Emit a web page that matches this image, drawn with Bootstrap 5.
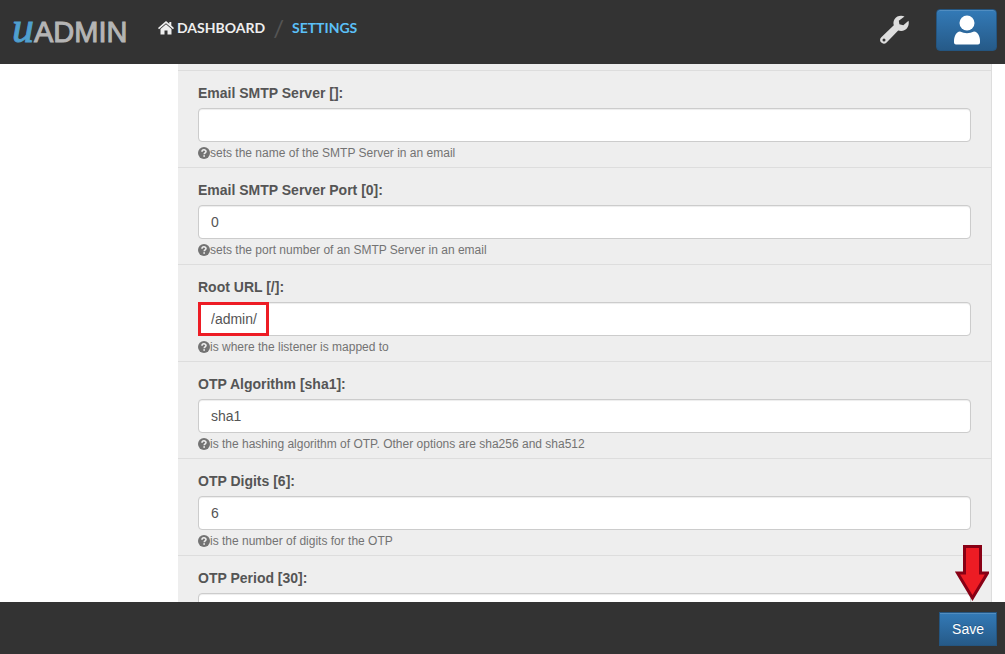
<!DOCTYPE html>
<html lang="en">
<head>
<meta charset="utf-8">
<meta name="viewport" content="width=device-width, initial-scale=1">
<title>uAdmin - Settings</title>
<link href="https://cdn.jsdelivr.net/npm/bootstrap@5.3.0/dist/css/bootstrap.min.css" rel="stylesheet">
<style>
  body { font-family: "Liberation Sans", Arial, sans-serif; font-size: 14px; line-height: 20px; color: #555; background: #fff; }
  .top-bar { height: 64px; padding: 0 8px 4px 12px; background: #333; }
  .bottom-bar { height: 52px; padding: 2px 8px 0; background: #333; }
  .brand { width: 146px; font-family: "Liberation Sans", sans-serif; font-size: 29px; line-height: 40px; color: #b5b5b5; -webkit-text-stroke: 1px #b5b5b5; }
  .brand-u { font-family: "Liberation Serif", serif; font-style: italic; font-size: 44px; color: #4f9fcf; -webkit-text-stroke: 1px #4f9fcf; }
  .crumbs { --bs-breadcrumb-margin-bottom: 0; --bs-breadcrumb-item-padding-x: 8px; padding-bottom: 4px; font-family: Lato, sans-serif; font-size: 14px; font-weight: 700; line-height: 24px; }
  .crumbs a { color: #eee; }
  .crumbs svg { margin-right: 3px; }
  .crumbs .breadcrumb-item + .breadcrumb-item::before { color: #555; font-size: 24px; font-weight: 400; }
  .crumbs .active { color: #5bc0f8; }
  .tools { margin-right: 26px; }
  .btn-grad { --bs-btn-color: #fff; --bs-btn-hover-color: #fff; --bs-btn-border-color: #245580; --bs-btn-hover-border-color: #245580; --bs-btn-font-size: 14px; --bs-btn-line-height: 20px; background: linear-gradient(#337ab7, #265a88); box-shadow: inset 0 1px 0 rgba(255,255,255,.15); }
  .btn-user { width: 61px; height: 42px; --bs-btn-border-radius: 4px; }
  .btn-save { --bs-btn-border-radius: 0; --bs-btn-padding-x: 12px; text-shadow: 0 -1px 0 rgba(0,0,0,.2); }
  .panel { margin: 0 13px 0 178px; padding-top: 6px; background: #eee; border-right: 1px solid #ddd; }
  .setting { padding: 12px 20px 5px; border-top: 1px solid #ddd; }
  .setting label { margin-bottom: 5px; font-weight: 700; }
  .setting .form-control { height: 34px; padding: 6px 12px; font-size: 14px; line-height: 20px; color: #555; border-color: #ccc; border-radius: 4px; box-shadow: inset 0 1px 1px rgba(0,0,0,.075); }
  .hint { margin-top: 2px; font-size: 12px; line-height: 18px; color: #737373; }
  .marker { top: 0; left: 0; width: 71px; height: 34px; border: 3px solid #ed1c24; }
  .save-arrow { right: 16px; bottom: 100%; }
</style>
</head>
<body>
<div class="d-flex flex-column vh-100 overflow-hidden">
  <header class="top-bar d-flex align-items-center flex-shrink-0">
    <a href="#" class="brand text-decoration-none flex-shrink-0"><span class="brand-u">u</span>ADMIN</a>
    <nav aria-label="Breadcrumb">
      <ol class="breadcrumb crumbs align-items-center">
        <li class="breadcrumb-item"><a href="#" class="d-flex align-items-center text-decoration-none"><svg width="16" height="14" viewBox="0 0 16 14" fill="currentColor" aria-hidden="true"><path d="M8 0 0 7l1 1.200 7-6 7 6L16 7l-2.700-2.500V1h-2v1.800z"/><path d="M8 3.300 2.500 8v5.500h4V9.500h3v4h4V8z"/></svg>DASHBOARD</a></li>
        <li class="breadcrumb-item active d-flex align-items-center" aria-current="page">SETTINGS</li>
      </ol>
    </nav>
    <div class="ms-auto d-flex align-items-center">
      <a href="#" aria-label="Tools" class="tools d-flex"><svg width="32" height="32" viewBox="0 0 32 32" aria-hidden="true"><path fill="#ddd" fill-rule="evenodd" d="M26.500 2.600c-3-1.600-8-.8-10 2.700-1.200 2-1.300 4.200-.7 6L3.300 23.200c-1.700 1.700-1.600 4 0 5.400 1.500 1.400 3.700 1.400 5.300-.2L20.200 16.500c3.400 1.200 7.400.3 9.400-3.200 1.200-2 1.500-4.500.9-6.500l-5.200 4.500-3.900-1.100-.6-3.400zM6 24.400a1.500 1.500 0 1 1 0 3 1.500 1.500 0 0 1 0-3z"/></svg></a>
      <button type="button" class="btn btn-grad btn-user d-flex align-items-center justify-content-center p-0" aria-label="User"><svg width="26" height="30" viewBox="0 0 26 30" fill="#fff" aria-hidden="true"><circle cx="13" cy="8" r="7.500"/><path d="M6 16.500q7 3.500 14 0c4 .5 6 5 6 9.500v1.500q0 2-2 2H2q-2 0-2-2V26c0-4.500 2-9 6-9.500z"/></svg></button>
    </div>
  </header>

  <main class="flex-grow-1 overflow-hidden">
    <form id="settings" class="panel">
      <div class="setting"><label class="d-block" for="smtp">Email SMTP Server []:</label><input id="smtp" class="form-control" type="text"><div class="hint d-flex align-items-center"><svg width="12" height="12" aria-hidden="true"><use href="#help"/></svg>sets the name of the SMTP Server in an email</div></div>
      <div class="setting"><label class="d-block" for="port">Email SMTP Server Port [0]:</label><input id="port" class="form-control" type="text" value="0"><div class="hint d-flex align-items-center"><svg width="12" height="12" aria-hidden="true"><use href="#help"/></svg>sets the port number of an SMTP Server in an email</div></div>
      <div class="setting"><label class="d-block" for="root">Root URL [/]:</label><div class="position-relative"><input id="root" class="form-control" type="text" value="/admin/"><span class="marker position-absolute pe-none"></span></div><div class="hint d-flex align-items-center"><svg width="12" height="12" aria-hidden="true"><use href="#help"/></svg>is where the listener is mapped to</div></div>
      <div class="setting"><label class="d-block" for="algo">OTP Algorithm [sha1]:</label><input id="algo" class="form-control" type="text" value="sha1"><div class="hint d-flex align-items-center"><svg width="12" height="12" aria-hidden="true"><use href="#help"/></svg>is the hashing algorithm of OTP. Other options are sha256 and sha512</div></div>
      <div class="setting"><label class="d-block" for="digits">OTP Digits [6]:</label><input id="digits" class="form-control" type="text" value="6"><div class="hint d-flex align-items-center"><svg width="12" height="12" aria-hidden="true"><use href="#help"/></svg>is the number of digits for the OTP</div></div>
      <div class="setting"><label class="d-block" for="period">OTP Period [30]:</label><input id="period" class="form-control" type="text"></div>
    </form>
  </main>

  <footer class="bottom-bar position-relative d-flex align-items-center justify-content-end flex-shrink-0">
    <svg class="save-arrow position-absolute" width="34" height="58" viewBox="0 0 34 58" aria-hidden="true"><path d="M9.500 2.500h16V29h7L17.500 54 2.500 29h7z" fill="#ed1c24" stroke="#880015" stroke-width="3"/></svg>
    <button type="submit" form="settings" class="btn btn-grad btn-save">Save</button>
  </footer>
</div>
<svg class="d-none" aria-hidden="true"><symbol id="help" viewBox="0 0 12 12"><circle cx="6" cy="6" r="6" fill="#737373"/><path d="M4 4.700C4 2.200 8 2.200 8 4.600 8 6 6.200 5.900 6.200 7.300" fill="none" stroke="#eee" stroke-width="1.600"/><path d="M5.300 8.200h1.700v1.600H5.300z" fill="#eee"/></symbol></svg>
<script src="https://cdn.jsdelivr.net/npm/bootstrap@5.3.0/dist/js/bootstrap.bundle.min.js"></script>
</body>
</html>
